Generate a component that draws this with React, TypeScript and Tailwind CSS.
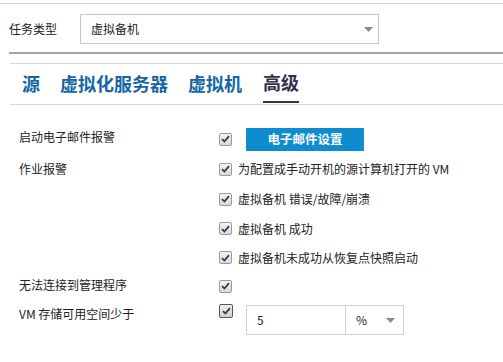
import React from "react";

const font = { fontFamily: '"Noto Sans CJK SC", "Liberation Sans", sans-serif' };

function Check({ dark = false }: { dark?: boolean }) {
  return (
    <div
      className={
        dark
          ? "w-[14px] h-[14px] border border-[#555] rounded-[2px] bg-gradient-to-b from-[#f0f0f0] to-[#cfcfcf] flex items-center justify-center"
          : "w-[13px] h-[13px] border border-[#9a9a9a] rounded-[2px] bg-gradient-to-b from-[#f4f4f4] to-[#d8d8d8] flex items-center justify-center"
      }
    >
      <svg width="9" height="8" viewBox="0 0 9 8">
        <path d="M1 4.2 L3.4 6.5 L8 1.2" stroke="#3a3a3a" strokeWidth="1.8" fill="none" />
      </svg>
    </div>
  );
}

function Arrow() {
  return (
    <svg width="9" height="5" viewBox="0 0 9 5">
      <path d="M0 0 H9 L4.5 5 Z" fill="#8a8a8a" />
    </svg>
  );
}

function OptRow({ text, h = "h-[29px]" }: { text: string; h?: string }) {
  return (
    <div className={"flex items-center " + h}>
      <Check />
      <span className="ml-[6px] text-[12px] text-[#222]">{text}</span>
    </div>
  );
}

export default function App() {
  return (
    <div className="w-[503px] h-[362px] bg-white overflow-hidden text-[#222]" style={font}>
      <div className="h-[3px]" />
      <div className="h-px bg-[#d6d6d6]" />
      <div className="flex items-center pl-[9px] mt-[10px] h-[30px]">
        <span className="text-[12px] w-[71px]">任务类型</span>
        <div className="w-[299px] h-[30px] border border-[#c8c8c8] flex items-center pl-[10px] pr-[5px] justify-between">
          <span className="text-[12px]">虚拟备机</span>
          <Arrow />
        </div>
      </div>
      <div className="ml-[9px] mt-[8px] h-[2px] bg-[#a4a4a4]" />
      <div className="ml-[10px] mt-[9px] h-px bg-[#d3d8de]" />
      <div className="flex items-stretch h-[40px] pl-[22px] text-[18px] font-bold">
        <div className="flex items-center text-[#1565a6] -mt-px">源</div>
        <div className="flex items-center ml-[20px] text-[#1565a6] -mt-px">虚拟化服务器</div>
        <div className="flex items-center ml-[20px] text-[#1565a6] -mt-px">虚拟机</div>
        <div className="flex flex-col ml-[21px] text-[#35304a]">
          <div className="flex-1 flex items-center">高级</div>
          <div className="h-[2px] bg-[#38334d] mb-px" />
        </div>
      </div>
      <div className="ml-[10px] h-px bg-[#d3d8de]" />

      <div className="pl-[19px] mt-[22px] text-[12px]">
        <div className="flex items-center h-[24px]">
          <span className="w-[200px] -mt-[4px]">启动电子邮件报警</span>
          <Check />
          <div className="ml-[14px] w-[118px] h-[23px] bg-[#0d8dcf] rounded-[1px] flex items-center justify-center text-white font-bold text-[12.5px]">
            电子邮件设置
          </div>
        </div>
        <div className="flex mt-[3px]">
          <span className="w-[200px] pt-[6px]">作业报警</span>
          <div className="flex flex-col">
            <OptRow text="为配置成手动开机的源计算机打开的 VM" h="h-[30px]" />
            <OptRow text="虚拟备机 错误/故障/崩溃" h="h-[30px]" />
            <OptRow text="虚拟备机 成功" />
            <OptRow text="虚拟备机未成功从恢复点快照启动" />
          </div>
        </div>
        <div className="flex items-center h-[28px]">
          <span className="w-[200px] -mt-[2px]">无法连接到管理程序</span>
          <Check />
        </div>
        <div className="flex mt-[4px]">
          <span className="w-[200px] pt-[1px]">VM 存储可用空间少于</span>
          <Check dark />
          <div className="ml-[13px] mt-[1px] flex h-[30px]">
            <div className="w-[100px] border border-[#cfcfcf] flex items-center pl-[10px]">5</div>
            <div className="w-[58px] border border-l-0 border-[#cfcfcf] flex items-center justify-between pl-[10px] pr-[8px]">
              <span>%</span>
              <Arrow />
            </div>
          </div>
        </div>
      </div>
    </div>
  );
}
